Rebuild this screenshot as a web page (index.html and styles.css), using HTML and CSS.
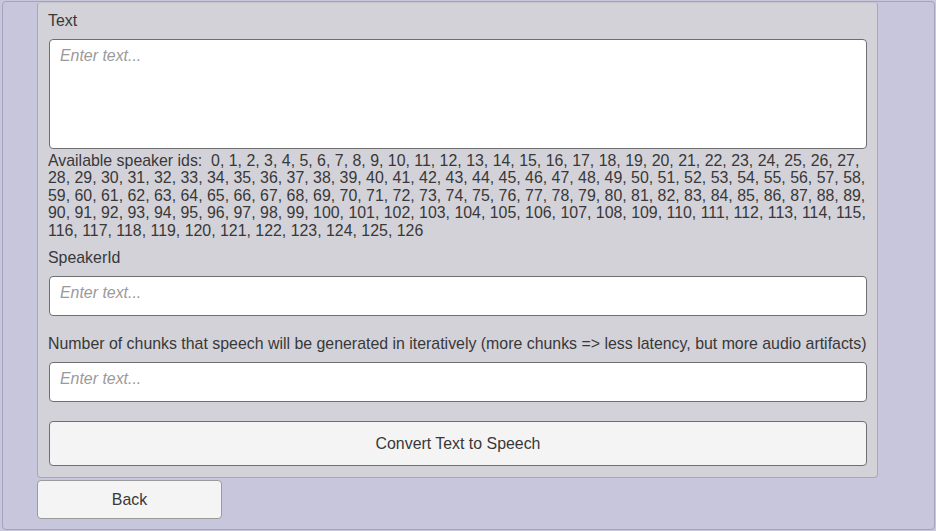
FILE: index.html
```html
<!DOCTYPE html>
<html>
<head>
<meta charset="utf-8">
<link rel="stylesheet" href="styles.css">
</head>
<body>
<div class="frame">
  <div class="panel">
    <div class="label">Text</div>
    <div class="textarea"><span class="placeholder">Enter text...</span></div>
    <div class="ids">Available speaker ids:&nbsp; 0, 1, 2, 3, 4, 5, 6, 7, 8, 9, 10, 11, 12, 13, 14, 15, 16, 17, 18, 19, 20, 21, 22, 23, 24, 25, 26, 27,<br>28, 29, 30, 31, 32, 33, 34, 35, 36, 37, 38, 39, 40, 41, 42, 43, 44, 45, 46, 47, 48, 49, 50, 51, 52, 53, 54, 55, 56, 57, 58,<br>59, 60, 61, 62, 63, 64, 65, 66, 67, 68, 69, 70, 71, 72, 73, 74, 75, 76, 77, 78, 79, 80, 81, 82, 83, 84, 85, 86, 87, 88, 89,<br>90, 91, 92, 93, 94, 95, 96, 97, 98, 99, 100, 101, 102, 103, 104, 105, 106, 107, 108, 109, 110, 111, 112, 113, 114, 115,<br>116, 117, 118, 119, 120, 121, 122, 123, 124, 125, 126</div>
    <div class="label label-speaker">SpeakerId</div>
    <div class="input"><span class="placeholder">Enter text...</span></div>
    <div class="label label-chunks">Number of chunks that speech will be generated in iteratively (more chunks =&gt; less latency, but more audio artifacts)</div>
    <div class="input"><span class="placeholder">Enter text...</span></div>
    <div class="button convert">Convert Text to Speech</div>
  </div>
  <div class="button back">Back</div>
</div>
</body>
</html>
```
FILE: styles.css
```css
html, body {
  margin: 0;
  padding: 0;
  background: #c8c6dc;
  font-family: "Liberation Sans", Arial, sans-serif;
  font-size: 15.9px;
  color: #383838;
}
.frame {
  box-sizing: border-box;
  margin: 1px 0 0 2px;
  width: 933px;
  height: 529px;
  border: 1px solid #a5a2bf;
  border-radius: 4px;
  padding: 0 0 0 34px;
}
.panel {
  box-sizing: border-box;
  width: 841px;
  height: 476px;
  background: #d3d2d8;
  border: 1px solid #aaa9b0;
  border-top-color: #c4c3ca;
  border-radius: 4px;
  padding: 9px 10px 0 10px;
  display: flex;
  flex-direction: column;
}
.label {
  line-height: 18px;
  white-space: nowrap;
}
.textarea {
  box-sizing: border-box;
  margin: 9px 0 0 1px;
  height: 110px;
  background: #ffffff;
  border: 1px solid #6f6f6f;
  border-radius: 4px;
  padding: 7px 10px;
}
.placeholder {
  font-style: italic;
  color: #9a9a9a;
  line-height: 18px;
}
.ids {
  line-height: 17.4px;
  margin-top: 3px;
  white-space: nowrap;
}
.label-speaker { margin-top: 10px; }
.input {
  box-sizing: border-box;
  margin: 9px 0 0 1px;
  height: 40px;
  background: #ffffff;
  border: 1px solid #6f6f6f;
  border-radius: 4px;
  padding: 7px 10px;
}
.label-chunks { margin-top: 19px; }
.button {
  box-sizing: border-box;
  background: #f4f4f4;
  border: 1px solid #6f6f6f;
  border-radius: 4px;
  display: flex;
  align-items: center;
  justify-content: center;
}
.convert {
  margin: 19px 0 0 1px;
  height: 45px;
}
.back {
  margin-top: 2px;
  width: 185px;
  height: 39px;
  border-color: #9a9a9a;
}
```
